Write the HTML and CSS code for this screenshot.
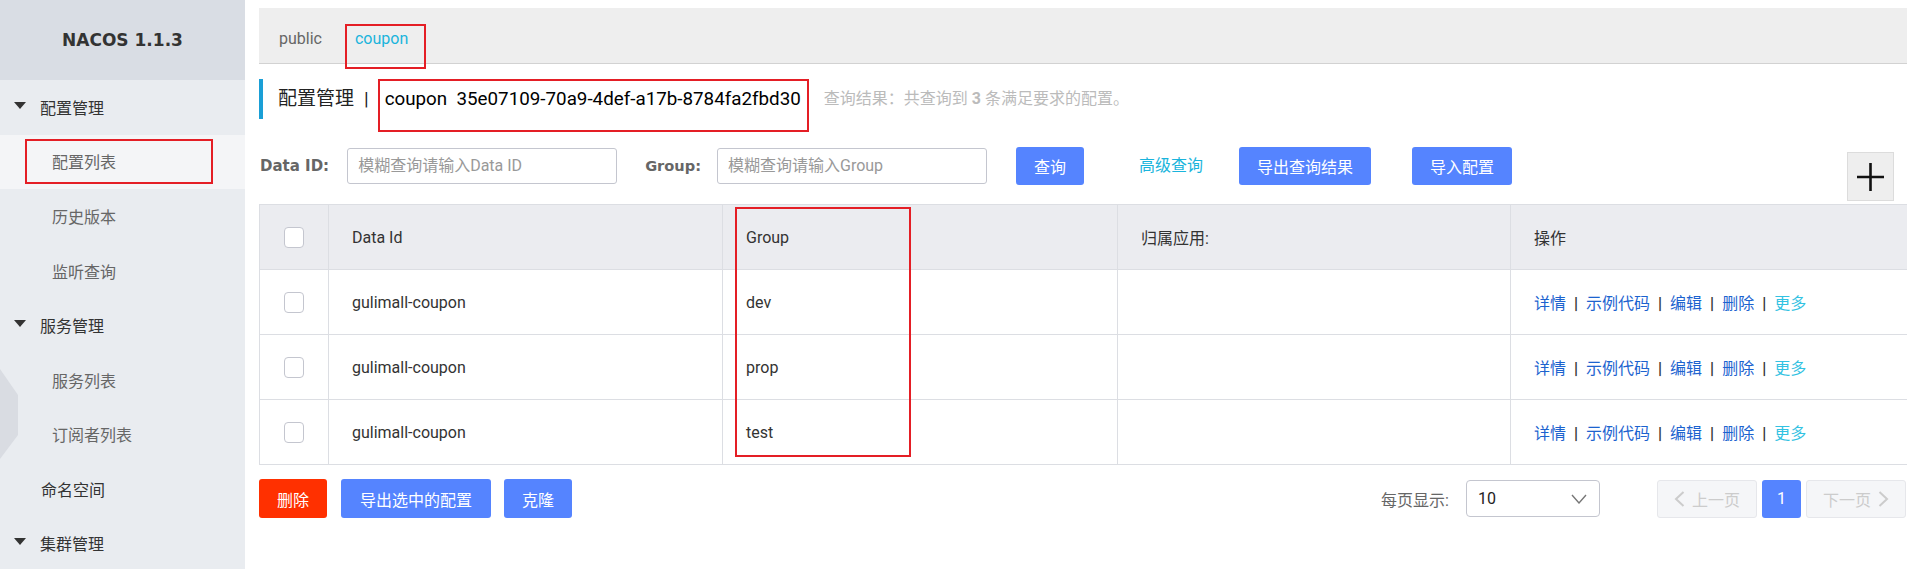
FILE: index.html
```html
<!DOCTYPE html>
<html lang="zh-CN">
<head>
<meta charset="utf-8">
<title>Nacos 配置列表</title>
<link rel="stylesheet" href="styles.css">
</head>
<body>
<div class="app">
  <aside class="sidebar">
    <div class="brand">NACOS 1.1.3</div>
    <ul class="menu">
      <li class="menu-group"><span class="caret"></span>配置管理</li>
      <li class="menu-sub active"><span class="mark-side">配置列表</span></li>
      <li class="menu-sub">历史版本</li>
      <li class="menu-sub">监听查询</li>
      <li class="menu-group"><span class="caret"></span>服务管理</li>
      <li class="menu-sub">服务列表</li>
      <li class="menu-sub">订阅者列表</li>
      <li class="menu-top">命名空间</li>
      <li class="menu-group"><span class="caret"></span>集群管理</li>
    </ul>
    <svg class="hex" width="20" height="100" viewBox="0 0 20 100"><polygon points="0,0 18,26 18,66 0,90" fill="#d9dce2"/></svg>
  </aside>

  <main class="main">
    <div class="tabs">
      <span class="tab">public</span>
      <span class="tab-divider"></span>
      <span class="tab tab-active">coupon</span>
    </div>

    <div class="title-row">
      <span class="title-bar"></span>
      <span class="title-text">配置管理</span>
      <span class="title-sep">|</span>
      <span class="mark-title">coupon  35e07109-70a9-4def-a17b-8784fa2fbd30</span>
      <span class="title-result">查询结果：共查询到 <b>3</b> 条满足要求的配置。</span>
    </div>

    <div class="filters">
      <label class="f-label">Data ID:</label>
      <div class="f-input">模糊查询请输入Data ID</div>
      <label class="f-label f-label-gap">Group:</label>
      <div class="f-input">模糊查询请输入Group</div>
      <button class="btn btn-primary btn-query">查询</button>
      <span class="link-adv">高级查询</span>
      <button class="btn btn-primary btn-export">导出查询结果</button>
      <button class="btn btn-primary btn-import">导入配置</button>
      <div class="plus-btn">
        <svg width="27" height="28" viewBox="0 0 27 28"><path d="M0 14H27M13.5 0V28" stroke="#111" stroke-width="2.6" fill="none"/></svg>
      </div>
    </div>

    <div class="table-wrap">
      <table class="grid">
        <colgroup>
          <col class="c1"><col class="c2"><col class="c3"><col class="c4"><col class="c5">
        </colgroup>
        <thead>
          <tr><th class="cb-cell"><span class="cb"></span></th><th>Data Id</th><th>Group</th><th>归属应用:</th><th>操作</th></tr>
        </thead>
        <tbody>
          <tr><td class="cb-cell"><span class="cb"></span></td><td>gulimall-coupon</td><td>dev</td><td></td>
            <td class="ops"><a>详情</a><i>|</i><a>示例代码</a><i>|</i><a>编辑</a><i>|</i><a>删除</a><i>|</i><a class="more">更多</a></td></tr>
          <tr><td class="cb-cell"><span class="cb"></span></td><td>gulimall-coupon</td><td>prop</td><td></td>
            <td class="ops"><a>详情</a><i>|</i><a>示例代码</a><i>|</i><a>编辑</a><i>|</i><a>删除</a><i>|</i><a class="more">更多</a></td></tr>
          <tr><td class="cb-cell"><span class="cb"></span></td><td>gulimall-coupon</td><td>test</td><td></td>
            <td class="ops"><a>详情</a><i>|</i><a>示例代码</a><i>|</i><a>编辑</a><i>|</i><a>删除</a><i>|</i><a class="more">更多</a></td></tr>
        </tbody>
      </table>
      <div class="mark-col"></div>
    </div>

    <div class="footer">
      <button class="btn btn-danger">删除</button>
      <button class="btn btn-primary btn-gap1">导出选中的配置</button>
      <button class="btn btn-primary btn-gap2">克隆</button>
      <div class="pager">
        <span class="page-size-label">每页显示:</span>
        <div class="select">
          <span>10</span>
          <svg width="16" height="10" viewBox="0 0 16 10"><path d="M1 1L8 9L15 1" stroke="#777" stroke-width="1.4" fill="none"/></svg>
        </div>
        <div class="pg pg-prev">
          <svg width="11" height="16" viewBox="0 0 11 16"><path d="M9.5 1L2 8L9.5 15" stroke="#ccc" stroke-width="2" fill="none"/></svg>
          <span>上一页</span>
        </div>
        <div class="pg pg-num">1</div>
        <div class="pg pg-next">
          <span>下一页</span>
          <svg width="11" height="16" viewBox="0 0 11 16"><path d="M1.5 1L9 8L1.5 15" stroke="#ccc" stroke-width="2" fill="none"/></svg>
        </div>
      </div>
    </div>
  </main>
</div>
</body>
</html>
```

FILE: styles.css
```css
* { box-sizing: border-box; }
html, body { margin: 0; padding: 0; }
body {
  font-family: Roboto, "Noto Sans CJK SC", sans-serif;
  font-size: 16px;
  color: #333;
  background: #fff;
  width: 1907px;
  height: 569px;
  overflow: hidden;
}
.app { display: flex; height: 569px; }

/* sidebar */
.sidebar {
  position: relative;
  width: 245px;
  flex: none;
  background: #e9ecf0;
  height: 569px;
  overflow: hidden;
}
.brand {
  height: 80px;
  background: #d9dde4;
  display: flex;
  align-items: center;
  justify-content: center;
  font-family: "DejaVu Sans", sans-serif;
  font-weight: bold;
  font-size: 17px;
  color: #333;
}
.menu { list-style: none; margin: 0; padding: 0; }
.menu li {
  height: 54.5px;
  display: flex;
  align-items: center;
  font-size: 16px;
}
.menu-group, .menu-top { color: #333; padding-left: 14px; }
.menu-top { padding-left: 41px; }
.caret {
  width: 0; height: 0;
  border-left: 6.5px solid transparent;
  border-right: 6.5px solid transparent;
  border-top: 7px solid #333;
  margin-right: 14px;
  margin-top: -4px;
}
.menu-sub { color: #666; padding-left: 52px; }
.menu-sub.active {
  background: #f4f5f7;
  padding: 4px 32px 5px 25px;
  align-items: stretch;
}
.mark-side {
  flex: 1;
  display: flex;
  align-items: center;
  border: 2px solid #e41e25;
  padding-left: 25px;
}
.hex { position: absolute; left: 0; top: 369px; }

/* main */
.main { flex: 1; padding: 8px 0 0 14px; min-width: 0; }
.tabs {
  height: 56px;
  background: #eeeeee;
  border-bottom: 1px solid #d2d2d2;
  display: flex;
  align-items: center;
  padding: 7px 0 0 20px;
}
.tab { color: #666; line-height: 20px; position: relative; }
.tab-divider { width: 1px; height: 12px; background: #c8c8c8; margin: 0 8px 0 24px; }
.tab-active { color: #1ab4dc; }
.tab-active::after {
  content: "";
  position: absolute;
  left: -10px; right: -18px; top: -5px; bottom: -20px;
  border: 2px solid #e41e25;
}

.title-row {
  display: flex;
  align-items: flex-start;
  margin-top: 15px;
  height: 53px;
}
.title-bar { width: 4px; height: 40px; background: #1a9fd6; }
.title-text { font-size: 19px; line-height: 40px; margin-left: 15px; color: #222; }
.title-sep { font-size: 19px; line-height: 40px; margin: 0 9px 0 10px; color: #222; }
.mark-title {
  border: 2px solid #e41e25;
  height: 53px;
  padding: 6px 6px 0 5px;
  font-size: 18.8px;
  line-height: 24px;
  color: #000;
  white-space: pre;
}
.title-result { line-height: 40px; margin-left: 15px; color: #bbb; font-size: 16px; }
.title-result b { font-weight: bold; }

.filters {
  display: flex;
  align-items: flex-start;
  margin-top: 15px;
  height: 54px;
}
.f-label {
  font-family: "DejaVu Sans", sans-serif;
  font-weight: bold;
  font-size: 15px;
  color: #666;
  line-height: 38px;
  margin-left: 1px;
  margin-right: 18px;
}
.f-label-gap { margin-left: 28px; margin-right: 16px; font-size: 14.6px; }
.f-input {
  width: 270px;
  height: 36px;
  margin-top: 1px;
  border: 1px solid #c4c6cf;
  border-radius: 3px;
  padding-left: 10px;
  line-height: 34px;
  color: #999;
  font-size: 16px;
}
.btn {
  height: 38px;
  border: none;
  border-radius: 3px;
  padding: 0 18px;
  font-family: Roboto, "Noto Sans CJK SC", sans-serif;
  font-size: 16px;
  color: #fff;
  cursor: pointer;
}
.btn-primary { background: #5584ff; }
.btn-danger { background: #ff3000; }
.btn-query { margin-left: 29px; }
.link-adv { color: #1ab4dc; line-height: 38px; margin-left: 55px; }
.btn-export { margin-left: 36px; }
.btn-import { margin-left: 41px; }
.plus-btn {
  margin-left: auto;
  margin-right: 13px;
  margin-top: 5px;
  width: 47px;
  height: 49px;
  background: #eeeeee;
  border: 1px solid #dcdcdc;
  display: flex;
  align-items: center;
  justify-content: center;
}

.table-wrap { position: relative; margin-top: 3px; }
.grid {
  width: 1648px;
  border-collapse: collapse;
  table-layout: fixed;
  font-size: 16px;
}
.c1 { width: 69px; }
.c2 { width: 394px; }
.c3 { width: 395px; }
.c4 { width: 393px; }
.c5 { width: 397px; }
.grid th, .grid td {
  border: 1px solid #dcdee3;
  height: 65px;
  padding: 0 0 0 23px;
  text-align: left;
  font-weight: normal;
  color: #333;
}
.grid th { background: #ebecf0; }
.grid .cb-cell { padding: 0; text-align: center; }
.cb {
  display: inline-block;
  width: 20px;
  height: 21px;
  border: 1px solid #c4c6cf;
  border-radius: 4px;
  background: #fff;
  vertical-align: middle;
}
.ops a { color: #1c63cf; }
.ops a.more { color: #33c2e2; }
.ops i { font-style: normal; color: #333; margin: 0 8px; font-weight: bold; }
.mark-col {
  position: absolute;
  left: 476px;
  top: 3px;
  width: 176px;
  height: 250px;
  border: 2px solid #e41e25;
}

.footer {
  display: flex;
  align-items: center;
  margin-top: 14px;
}
.footer .btn { height: 39px; }
.btn-gap1 { margin-left: 14px; padding: 0 19px; }
.btn-gap2 { margin-left: 13px; }
.pager { margin-left: auto; display: flex; align-items: center; margin-right: 1px; }
.page-size-label { color: #666; margin-right: 17px; }
.select {
  width: 134px;
  height: 37px;
  border: 1px solid #c4c6cf;
  border-radius: 4px;
  display: flex;
  align-items: center;
  justify-content: space-between;
  padding: 0 12px 0 11px;
  color: #222;
}
.pg {
  height: 38px;
  border-radius: 3px;
  display: flex;
  align-items: center;
}
.pg-prev, .pg-next {
  width: 100px;
  background: #f5f6f8;
  border: 1px solid #e6e7eb;
  color: #ccc;
  justify-content: center;
  gap: 7px;
}
.pg-prev { margin-left: 57px; }
.pg-num {
  width: 39px;
  margin: 0 5px;
  background: #5584ff;
  color: #fff;
  justify-content: center;
}
```
